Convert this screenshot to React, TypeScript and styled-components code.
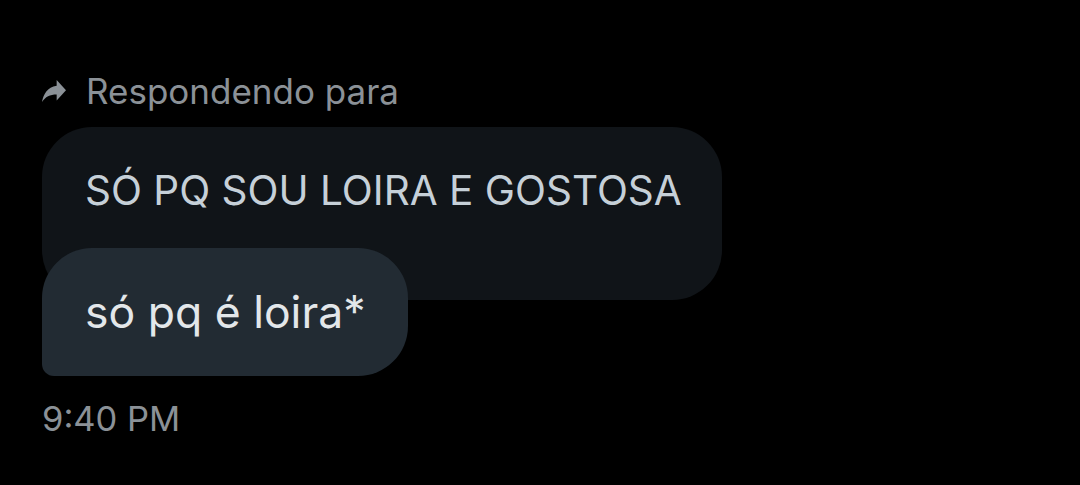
import React from 'react';
import styled, { createGlobalStyle } from 'styled-components';

const GlobalStyle = createGlobalStyle`
  html, body {
    margin: 0;
    padding: 0;
    background: #000000;
  }
  body {
    font-family: Inter, Roboto, "Liberation Sans", sans-serif;
  }
`;

function ReplyIcon() {
  return (
    <svg width="24" height="22" viewBox="3 5 18 15" preserveAspectRatio="none" aria-hidden="true">
      <path
        transform="translate(24 0) scale(-1 1)"
        fill="#8b9197"
        d="M10 9V5l-7 7 7 7v-4.1c5 0 8.5 1.6 11 5.1-1-5-4-10-11-11z"
      />
    </svg>
  );
}

function App() {
  return (
    <>
      <GlobalStyle />
      <Page>
        <ReplyHeader>
          <ReplyIcon />
          <ReplyLabel>Respondendo para</ReplyLabel>
        </ReplyHeader>
        <Thread>
          <QuotedBubble>SÓ PQ SOU LOIRA E GOSTOSA</QuotedBubble>
          <MessageBubble>só pq é loira*</MessageBubble>
        </Thread>
        <Timestamp>9:40 PM</Timestamp>
      </Page>
    </>
  );
}

const Page = styled.main`
  width: 1080px;
  height: 485px;
  box-sizing: border-box;
  padding: 72px 0 0 42px;
  background: #000000;
  display: flex;
  flex-direction: column;
  align-items: flex-start;
`;

const ReplyHeader = styled.div`
  display: flex;
  align-items: center;
  gap: 20px;
  height: 38px;
`;

const ReplyLabel = styled.span`
  font-size: 35px;
  color: #8b9197;
  line-height: 38px;
`;

const Thread = styled.div`
  margin-top: 17px;
  display: flex;
  flex-direction: column;
  align-items: flex-start;
`;

const QuotedBubble = styled.div`
  width: 680px;
  height: 173px;
  box-sizing: border-box;
  padding: 42px 0 0 43px;
  background: #101418;
  border-radius: 50px;
  color: #c6d0d8;
  font-size: 40.5px;
  line-height: 44px;
  white-space: nowrap;
`;

const MessageBubble = styled.div`
  margin-top: -52px;
  height: 128px;
  box-sizing: border-box;
  padding: 0 43px;
  display: flex;
  align-items: center;
  background: #222b33;
  border-radius: 50px 50px 50px 12px;
  color: #e3e7ea;
  font-size: 44.5px;
  white-space: nowrap;
`;

const Timestamp = styled.div`
  margin-top: 24px;
  color: #8b9197;
  font-size: 34.5px;
  line-height: 38px;
`;

export default App;
